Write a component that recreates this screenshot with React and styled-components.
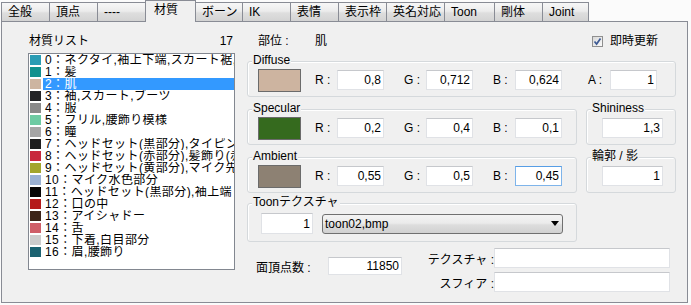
import React from 'react';
import styled, { createGlobalStyle } from 'styled-components';

const GlobalStyle = createGlobalStyle`
  html, body {
    margin: 0;
    padding: 0;
    background: #fbfbfb;
  }
  body {
    font-family: "Liberation Sans", "Noto Sans CJK JP", sans-serif;
    font-size: 12px;
    color: #000;
  }
`;

// window + tab strip
const Window = styled.div`
  width: 688px;
  height: 305px;
  padding-left: 1px;
  box-sizing: border-box;
`;

const TabStrip = styled.div`
  display: flex;
  align-items: flex-end;
  height: 21px;
  padding-left: 1px;
  position: relative;
  z-index: 1;
`;

const Tab = styled.div`
  box-sizing: border-box;
  width: ${p => p.$w}px;
  height: ${p => (p.$active ? 22 : 19)}px;
  margin-left: -1px;
  margin-bottom: ${p => (p.$active ? -1 : 0)}px;
  padding: ${p => (p.$active ? '2px 0 0 8px' : '2px 0 0 6px')};
  border: 1px solid #898c95;
  border-bottom: none;
  background: ${p =>
    p.$active ? '#f0f0f0' : 'linear-gradient(#f7f7f7, #ececec 45%, #dedede 55%, #d3d3d3)'};
  line-height: 15px;
  white-space: nowrap;
  position: relative;
  z-index: ${p => (p.$active ? 2 : 1)};
`;

const Panel = styled.div`
  box-sizing: border-box;
  width: 687px;
  height: 282px;
  border: 1px solid #898c95;
  background: #f0f0f0;
  display: flex;
  gap: 12px;
  padding: 12px 0 0 26px;
`;

// left: material list
const ListColumn = styled.div`
  width: 207px;
  display: flex;
  flex-direction: column;
`;

const HeaderRow = styled.div`
  display: flex;
  justify-content: space-between;
  align-items: center;
  height: 14px;
  line-height: 14px;
  padding: 0 2px 0 1px;
`;

const ListBox = styled.div`
  box-sizing: border-box;
  margin-top: 5px;
  height: 217px;
  border: 1px solid #828790;
  background: #fff;
  overflow: hidden;
`;

const ListRow = styled.div`
  display: flex;
  align-items: center;
  height: 12px;
  padding-left: 1px;
`;

const ColorChip = styled.span`
  flex: none;
  width: 11px;
  height: 10px;
  margin-right: 2px;
  background: ${p => p.$c};
`;

const ItemText = styled.span`
  flex: 1;
  height: 12px;
  line-height: 12px;
  padding-left: 2px;
  letter-spacing: 0.4px;
  white-space: nowrap;
  overflow: hidden;
  background: ${p => (p.$sel ? '#3399ff' : 'transparent')};
  color: ${p => (p.$sel ? '#fff' : '#000')};
`;

// right: properties
const PropColumn = styled.div`
  width: 429px;
  display: flex;
  flex-direction: column;
`;

const TopRow = styled.div`
  display: flex;
  align-items: center;
  height: 14px;
  line-height: 14px;
  padding-left: 11px;
`;

const PartLabel = styled.span`
  width: 57px;
`;

const CheckWrap = styled.label`
  margin-left: auto;
  margin-right: 18px;
  display: flex;
  align-items: center;
  gap: 7px;
`;

const CheckBox = styled.span`
  box-sizing: border-box;
  width: 11px;
  height: 11px;
  border: 1px solid #8f8f8f;
  background: linear-gradient(135deg, #d8d8d8, #fbfbfb);
  display: inline-flex;
  align-items: center;
  justify-content: center;
`;

const Group = styled.div`
  position: relative;
  box-sizing: border-box;
  width: ${p => p.$w}px;
  height: ${p => p.$h || 36}px;
  margin-top: ${p => p.$mt || 0}px;
  border: 1px solid #d5d9dc;
  border-radius: 3px;
  box-shadow: inset 1px 1px 0 #fff;
  display: flex;
  align-items: center;
  padding: 2px 0 0 ${p => p.$pl || 10}px;
`;

const GroupLabel = styled.span`
  position: absolute;
  top: -9px;
  left: 4px;
  padding: 0 1px;
  line-height: 14px;
  background: #f0f0f0;
  white-space: nowrap;
`;

const GroupRow = styled.div`
  display: flex;
  gap: 9px;
  margin-top: ${p => p.$mt || 0}px;
`;

const Swatch = styled.span`
  box-sizing: border-box;
  width: 43px;
  height: 23px;
  margin-right: 14px;
  border: 1px solid #6b6b6b;
  background: ${p => p.$c};
`;

const Field = styled.div`
  display: flex;
  align-items: center;
  margin-left: ${p => p.$ml || 0}px;
`;

const FieldLabel = styled.span`
  width: 22px;
  white-space: pre;
`;

const NumInput = styled.input`
  box-sizing: border-box;
  width: ${p => p.$w || 47}px;
  height: ${p => p.$h || 20}px;
  margin: 0;
  padding: 0 2px 0 0;
  border: 1px solid ${p => (p.$focus ? '#7eb4ea' : '#e0e2e6')};
  border-top-color: ${p => (p.$focus ? '#569de5' : '#c6c8cc')};
  background: #fff;
  font: inherit;
  color: #000;
  text-align: right;
  outline: none;
`;

const Combo = styled.div`
  box-sizing: border-box;
  width: 241px;
  height: 20px;
  margin-left: 9px;
  border: 1px solid #707070;
  border-radius: 3px;
  background: linear-gradient(#f3f3f3, #ebebeb 45%, #dddddd 55%, #d1d1d1);
  display: flex;
  align-items: center;
  justify-content: space-between;
  padding: 0 3px 0 2px;
`;

const BottomRow = styled.div`
  display: flex;
  margin-top: 6px;
`;

const VertexBlock = styled.div`
  display: flex;
  align-items: center;
  padding-left: 9px;
  margin-top: 9px;
  height: 18px;
`;

const VertexLabel = styled.span`
  width: 72px;
  white-space: pre;
`;

const TexBlock = styled.div`
  margin-left: auto;
  margin-right: 6px;
  display: flex;
  flex-direction: column;
  gap: 4px;
`;

const TexRow = styled.div`
  display: flex;
  align-items: center;
  justify-content: flex-end;
`;

const TexLabel = styled.span`
  white-space: pre;
`;

const TextInput = styled(NumInput)`
  text-align: left;
`;

const tabs = [
  { label: '全般', w: 49 },
  { label: '頂点', w: 49 },
  { label: '----', w: 49 },
  { label: '材質', w: 51, active: true },
  { label: 'ボーン', w: 48 },
  { label: 'IK', w: 49 },
  { label: '表情', w: 49 },
  { label: '表示枠', w: 49 },
  { label: '英名対応', w: 59 },
  { label: 'Toon', w: 51 },
  { label: '剛体', w: 49 },
  { label: 'Joint', w: 47 },
];

const materials = [
  ['#2a9cb4', 'ネクタイ,袖上下端,スカート裾,ネクタイ'],
  ['#12918e', '髪'],
  ['#cdb5a1', '肌'],
  ['#222326', '袖,スカート,ブーツ'],
  ['#8a8a8a', '服'],
  ['#6ecba3', 'フリル,腰飾り模様'],
  ['#a6a6a6', '瞳'],
  ['#1e1e1e', 'ヘッドセット(黒部分),タイピン'],
  ['#c8283c', 'ヘッドセット(赤部分),髪飾り(赤部分)'],
  ['#a3a52c', 'ヘッドセット(黄部分),マイク先'],
  ['#9ab1d3', 'マイク水色部分'],
  ['#060606', 'ヘッドセット(黒部分),袖上端'],
  ['#b51b1b', '口の中'],
  ['#3c2418', 'アイシャドー'],
  ['#cf5e68', '舌'],
  ['#cdcdcd', '下着,白目部分'],
  ['#1b6271', '眉,腰飾り'],
];

const RGBFields = ({ r, g, b, focusB }) => (
  <>
    <Field>
      <FieldLabel>R :</FieldLabel>
      <NumInput readOnly value={r} />
    </Field>
    <Field $ml={20}>
      <FieldLabel>G :</FieldLabel>
      <NumInput readOnly value={g} />
    </Field>
    <Field $ml={20}>
      <FieldLabel>B :</FieldLabel>
      <NumInput readOnly value={b} $focus={focusB} />
    </Field>
  </>
);

const App = () => {
  return (
    <Window>
      <GlobalStyle />
      <TabStrip>
        {tabs.map(t => (
          <Tab key={t.label} $w={t.w} $active={t.active}>
            {t.label}
          </Tab>
        ))}
      </TabStrip>
      <Panel>
        <ListColumn>
          <HeaderRow>
            <span>材質リスト</span>
            <span>17</span>
          </HeaderRow>
          <ListBox>
            {materials.map(([c, name], i) => (
              <ListRow key={i}>
                <ColorChip $c={c} />
                <ItemText $sel={i === 2}>
                  {i}：{name}
                </ItemText>
              </ListRow>
            ))}
          </ListBox>
        </ListColumn>

        <PropColumn>
          <TopRow>
            <PartLabel>部位 :</PartLabel>
            <span>肌</span>
            <CheckWrap>
              <CheckBox>
                <svg width="9" height="9" viewBox="0 0 9 9">
                  <path d="M1.5 4.5 L3.6 7 L7.5 1.5" fill="none" stroke="#3d5a94" strokeWidth="1.7" />
                </svg>
              </CheckBox>
              即時更新
            </CheckWrap>
          </TopRow>

          <Group $w={429} $mt={13}>
            <GroupLabel>Diffuse</GroupLabel>
            <Swatch $c="#cdb4a0" />
            <RGBFields r="0,8" g="0,712" b="0,624" />
            <Field $ml={26}>
              <FieldLabel>A :</FieldLabel>
              <NumInput readOnly value="1" />
            </Field>
          </Group>

          <GroupRow $mt={12}>
            <Group $w={330}>
              <GroupLabel>Specular</GroupLabel>
              <Swatch $c="#356a1e" />
              <RGBFields r="0,2" g="0,4" b="0,1" />
            </Group>
            <Group $w={90} $pl={15}>
              <GroupLabel>Shininess</GroupLabel>
              <NumInput readOnly value="1,3" $w={61} />
            </Group>
          </GroupRow>

          <GroupRow $mt={12}>
            <Group $w={330}>
              <GroupLabel>Ambient</GroupLabel>
              <Swatch $c="#8d8173" />
              <RGBFields r="0,55" g="0,5" b="0,45" focusB />
            </Group>
            <Group $w={90} $pl={15}>
              <GroupLabel>輪郭 / 影</GroupLabel>
              <NumInput readOnly value="1" $w={61} />
            </Group>
          </GroupRow>

          <Group $w={330} $h={39} $mt={10} $pl={13}>
            <GroupLabel>Toonテクスチャ</GroupLabel>
            <NumInput readOnly value="1" $w={52} $h={21} />
            <Combo>
              <span>toon02,bmp</span>
              <svg width="8" height="5" viewBox="0 0 8 5">
                <path d="M0 0 H8 L4 5 Z" fill="#000" />
              </svg>
            </Combo>
          </Group>

          <BottomRow>
            <VertexBlock>
              <VertexLabel>面頂点数 :</VertexLabel>
              <NumInput readOnly value="11850" $w={74} $h={18} />
            </VertexBlock>
            <TexBlock>
              <TexRow>
                <TexLabel>テクスチャ :</TexLabel>
                <TextInput readOnly value="" $w={176} />
              </TexRow>
              <TexRow>
                <TexLabel>スフィア :</TexLabel>
                <TextInput readOnly value="" $w={176} />
              </TexRow>
            </TexBlock>
          </BottomRow>
        </PropColumn>
      </Panel>
    </Window>
  );
};

export default App;
